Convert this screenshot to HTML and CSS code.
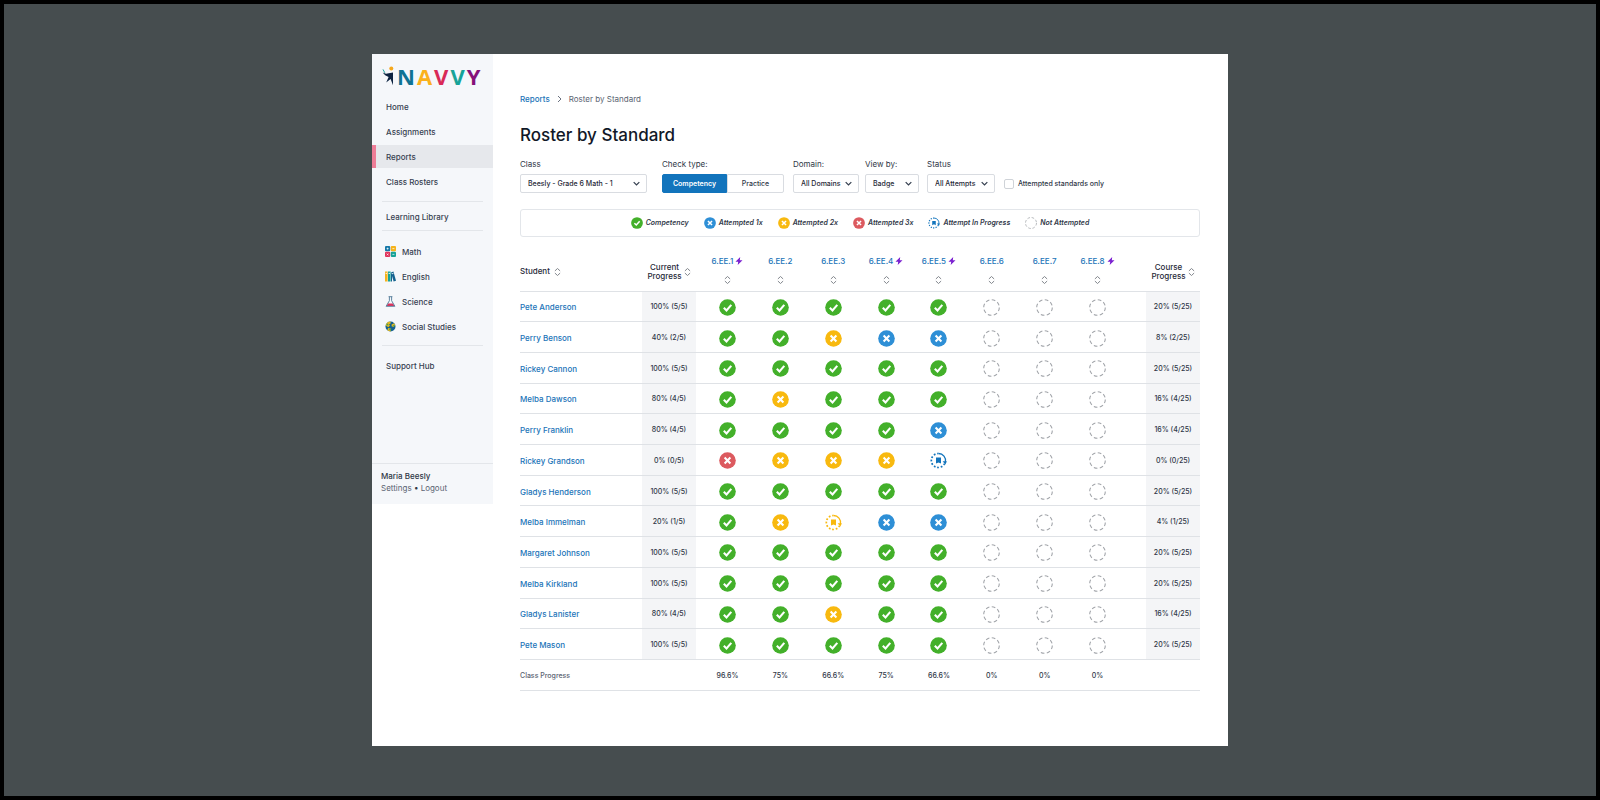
FILE: index.html
```html
<!DOCTYPE html>
<html lang="en">
<head>
  <meta charset="UTF-8">
  <title>Roster by Standard - Navvy</title>
  <link rel="stylesheet" href="styles.css">
</head>
<body>

<svg class="sprite" aria-hidden="true">
  <symbol id="check" viewBox="0 0 17 17">
    <circle cx="8.5" cy="8.5" r="8.3" fill="#43b02a"/>
    <path d="M4.8 8.8l2.7 2.6L12.3 5.9" fill="none" stroke="#fff" stroke-width="2.1"/>
  </symbol>
  <symbol id="cross" viewBox="0 0 17 17">
    <circle cx="8.5" cy="8.5" r="8.3" fill="currentColor"/>
    <path d="M5.6 5.6l5.8 5.8M11.4 5.6l-5.8 5.8" fill="none" stroke="#fff" stroke-width="2.1"/>
  </symbol>
  <symbol id="progress" viewBox="0 0 17 17">
    <path d="M14.6 11.6A7 7 0 1 1 8.5 1.5" fill="none" stroke="currentColor" stroke-width="1.7" stroke-dasharray="1.7 1.8"/>
    <path d="M8.5 1.5A7 7 0 0 1 15.4 10" fill="none" stroke="currentColor" stroke-width="1.3"/>
    <path d="M12.6 9.2h4.3l-1.5 3.4z" fill="currentColor"/>
    <path d="M6 5.6h5v6L8.5 10.4 6 11.6z" fill="currentColor"/>
  </symbol>
  <symbol id="empty" viewBox="0 0 17 17">
    <circle cx="8.5" cy="8.5" r="7.8" fill="none" stroke="#a3a6ab" stroke-width="1.1" stroke-dasharray="3.7 2.43"/>
  </symbol>
  <symbol id="sort" viewBox="0 0 8 10">
    <path d="M1 3.8L4 1l3 2.8M1 6.2L4 9l3-2.8" fill="none" stroke="#7d8188" stroke-width="1.1"/>
  </symbol>
  <symbol id="bolt" viewBox="0 0 8 8">
    <path d="M5.2 0L.5 4.7h2.7L2.7 8l4.8-4.8H4.8z" fill="#7a1fd0"/>
  </symbol>
  <symbol id="down" viewBox="0 0 8 8">
    <path d="M1.5 2.8L4 5.3l2.5-2.5" fill="none" stroke="#374151" stroke-width="1.1"/>
  </symbol>
</svg>

<div class="window">
  <aside class="sidebar">
    <a class="logo" href="#" aria-label="Navvy">
      <svg width="12" height="20" viewBox="0 0 12 20">
        <circle cx="9.3" cy="2.6" r="2" fill="#f5a81c"/>
        <path d="M1 3.4l1.8 3.4" stroke="#1ba39c" stroke-width="1"/>
        <path d="M.6 6.4l3.4 1.4 7-1.2v12.6L8.6 13l-4.4 3.6L6.6 11 3.2 9.2z" fill="#0d2340"/>
      </svg>
      <span class="letters"><span class="n">N</span><span class="a">A</span><span class="v">V</span><span class="v2">V</span><span class="y">Y</span></span>
    </a>
    <nav>
      <ul>
        <li><a href="#">Home</a></li>
        <li><a href="#">Assignments</a></li>
        <li><a href="#" class="active">Reports</a></li>
        <li><a href="#">Class Rosters</a></li>
      </ul>
      <h2>Learning Library</h2>
      <ul class="subjects">
        <li><a href="#">
          <svg width="11" height="11" viewBox="0 0 11 11">
            <rect width="5.2" height="5.2" rx="1" fill="#1678a8"/><rect x="5.8" width="5.2" height="5.2" rx="1" fill="#f5b31c"/>
            <rect y="5.8" width="5.2" height="5.2" rx="1" fill="#e0335c"/><rect x="5.8" y="5.8" width="5.2" height="5.2" rx="1" fill="#17a398"/>
            <path d="M1.6 2.6h2M2.6 1.6v2M7.4 2.6h2M1.8 7.6l1.6 1.6M3.4 7.6L1.8 9.2M7.4 8.4h2" stroke="#fff" stroke-width=".7"/>
          </svg>Math</a></li>
        <li><a href="#">
          <svg width="11" height="11" viewBox="0 0 11 11">
            <rect y=".5" width="2.6" height="10" fill="#f5b31c"/><rect x="3" y=".5" width="2.6" height="10" fill="#17a398"/>
            <path d="M6 1.4l2.4-.8L11 9.7l-2.4.8z" fill="#14628f"/><path d="M6 3h1v7.5H6z" fill="#14628f"/>
            <path d="M.6 2.4H2M3.6 2.4H5M7 2.8l1.4-.4" stroke="#fff" stroke-width=".9"/>
          </svg>English</a></li>
        <li><a href="#">
          <svg width="11" height="11" viewBox="0 0 11 11">
            <path d="M3 7.6L1.6 10h7.8L8 7.6z" fill="#e0335c"/>
            <path d="M3.6.7h3.8M4.4.7v4L1.1 10.3h8.8L6.6 4.7v-4" fill="none" stroke="#4f7896" stroke-width=".9"/>
          </svg>Science</a></li>
        <li><a href="#">
          <svg width="11" height="11" viewBox="0 0 11 11">
            <circle cx="5.5" cy="5.5" r="5" fill="#14628f"/>
            <path d="M.7 4.4C1.3 2 3 .6 5.4.6l.4 1.6-1.8 1.2 1 1.2-1.6 1.6zM6.6 3.4l2.6-1.2 1 2-1.6 1.8-2-.8zM3.2 7l3 .8-.6 2.6C4.2 10.4 3 9.8 2.4 9z" fill="#e3b81f"/>
            <path d="M1 4.2l2-2 .4 2zM8 4l2.2.4-1.6 1.4zM4 8h2l-.6 2z" fill="#35a05a"/>
          </svg>Social Studies</a></li>
      </ul>
      <ul class="support">
        <li><a href="#">Support Hub</a></li>
      </ul>
    </nav>
    <div class="user">
      <strong>Maria Beesly</strong>
      <div><a href="#">Settings</a> • <a href="#">Logout</a></div>
    </div>
  </aside>

  <main>
    <div class="breadcrumb">
      <a href="#">Reports</a>
      <svg width="5" height="8" viewBox="0 0 5 8"><path d="M1 1l3 3-3 3" fill="none" stroke="#6b7280"/></svg>
      <span>Roster by Standard</span>
    </div>
    <h1>Roster by Standard</h1>

    <form class="filters">
      <div class="field class-field">
        <label for="class">Class</label>
        <div class="select"><select id="class"><option>Beesly - Grade 6 Math - 1</option></select><svg><use href="#down"/></svg></div>
      </div>
      <div class="field type-field">
        <span class="label">Check type:</span>
        <div class="toggle"><button type="button" class="on">Competency</button><button type="button">Practice</button></div>
      </div>
      <div class="field domain-field">
        <label for="domain">Domain:</label>
        <div class="select"><select id="domain"><option>All Domains</option></select><svg><use href="#down"/></svg></div>
      </div>
      <div class="field view-field">
        <label for="view">View by:</label>
        <div class="select"><select id="view"><option>Badge</option></select><svg><use href="#down"/></svg></div>
      </div>
      <div class="field status-field">
        <label for="status">Status</label>
        <div class="select"><select id="status"><option>All Attempts</option></select><svg><use href="#down"/></svg></div>
      </div>
      <label class="only"><input type="checkbox"> Attempted standards only</label>
    </form>

    <div class="legend">
      <span><svg><use href="#check"/></svg>Competency</span>
      <span><svg class="blue"><use href="#cross"/></svg>Attempted 1x</span>
      <span><svg class="yellow"><use href="#cross"/></svg>Attempted 2x</span>
      <span><svg class="red"><use href="#cross"/></svg>Attempted 3x</span>
      <span><svg class="blue-line"><use href="#progress"/></svg>Attempt In Progress</span>
      <span><svg><use href="#empty"/></svg>Not Attempted</span>
    </div>

    <table>
      <colgroup>
        <col class="col-student"><col class="col-progress"><col class="col-left">
        <col span="8">
        <col class="col-right"><col class="col-progress">
      </colgroup>
      <thead><tr id="head"></tr></thead>
      <tbody id="rows"></tbody>
      <tfoot><tr id="foot"></tr></tfoot>
    </table>
  </main>
</div>

<script>
  // c = competency, 1/2/3 = attempts, p/q = in progress, - = not attempted
  const badges = {
    'c': ['check', '', 'Competency'],
    '1': ['cross', 'blue', 'Attempted 1x'],
    '2': ['cross', 'yellow', 'Attempted 2x'],
    '3': ['cross', 'red', 'Attempted 3x'],
    'p': ['progress', 'blue-line', 'Attempt In Progress'],
    'q': ['progress', 'yellow', 'Attempt In Progress'],
    '-': ['empty', '', 'Not Attempted']
  };

  const students = [
    ['Pete Anderson', '100% (5/5)', 'ccccc---', '20% (5/25)'],
    ['Perry Benson', '40% (2/5)', 'cc211---', '8% (2/25)'],
    ['Rickey Cannon', '100% (5/5)', 'ccccc---', '20% (5/25)'],
    ['Melba Dawson', '80% (4/5)', 'c2ccc---', '16% (4/25)'],
    ['Perry Franklin', '80% (4/5)', 'cccc1---', '16% (4/25)'],
    ['Rickey Grandson', '0% (0/5)', '3222p---', '0% (0/25)'],
    ['Gladys Henderson', '100% (5/5)', 'ccccc---', '20% (5/25)'],
    ['Melba Immelman', '20% (1/5)', 'c2q11---', '4% (1/25)'],
    ['Margaret Johnson', '100% (5/5)', 'ccccc---', '20% (5/25)'],
    ['Melba Kirkland', '100% (5/5)', 'ccccc---', '20% (5/25)'],
    ['Gladys Lanister', '80% (4/5)', 'cc2cc---', '16% (4/25)'],
    ['Pete Mason', '100% (5/5)', 'ccccc---', '20% (5/25)']
  ];

  const totals = ['96.6%', '75%', '66.6%', '75%', '66.6%', '0%', '0%', '0%'];
  const priority = [1, 4, 5, 8];

  function sortButton(name) {
    return `<button class="sort" aria-label="Sort by ${name}"><svg><use href="#sort"/></svg></button>`;
  }

  function badge(code) {
    const [icon, color, title] = badges[code];
    return `<td class="badge"><svg class="${color}" role="img" aria-label="${title}"><use href="#${icon}"/></svg></td>`;
  }

  document.getElementById('head').innerHTML =
    `<th class="student"><div class="sortable">Student ${sortButton('student')}</div></th>` +
    `<th><div class="sortable stacked"><span>Current<br>Progress</span>${sortButton('current progress')}</div></th><td></td>` +
    totals.map((t, i) => {
      const n = i + 1;
      const bolt = priority.includes(n) ? '<svg class="bolt"><use href="#bolt"/></svg>' : '';
      return `<th class="standard"><a href="#">6.EE.${n}${bolt}</a>${sortButton('6.EE.' + n)}</th>`;
    }).join('') +
    `<td></td><th><div class="sortable stacked"><span>Course<br>Progress</span>${sortButton('course progress')}</div></th>`;

  document.getElementById('rows').innerHTML = students.map(([name, current, marks, course]) =>
    `<tr><td class="student"><a href="#">${name}</a></td><td class="shade">${current}</td><td></td>` +
    [...marks].map(badge).join('') +
    `<td></td><td class="shade">${course}</td></tr>`
  ).join('');

  document.getElementById('foot').innerHTML =
    '<td class="student">Class Progress</td><td></td><td></td>' +
    totals.map(t => `<td>${t}</td>`).join('') + '<td></td><td></td>';
</script>

</body>
</html>
```
FILE: styles.css
```css
* {
  box-sizing: border-box;
}

body {
  margin: 0;
  min-height: 100vh;
  padding: 50px 16px;
  border: 4px solid #000;
  background-color: #464d4f;
  color: #2f3747;
  font-family: Inter, sans-serif;
  font-size: 8px;
  line-height: 10px;
}

a {
  color: #1b74b8;
  text-decoration: none;
}

button, select, input {
  font: inherit;
  color: inherit;
}

ul {
  list-style: none;
  margin: 0;
  padding: 0;
}

.sprite {
  display: none;
}

.window {
  max-width: 856px;
  margin: 0 auto;
  background-color: #fff;
  display: flex;
  align-items: flex-start;
}

/* sidebar */
.sidebar {
  width: 121px;
  min-height: 450px;
  flex-shrink: 0;
  background-color: #f5f7fa;
  display: flex;
  flex-direction: column;
}

.logo {
  display: flex;
  align-items: center;
  gap: 3px;
  padding: 12px 0 9px 10px;
}

.letters {
  display: flex;
  gap: 2px;
  font-family: "Open Sans", sans-serif;
  font-size: 22px;
  font-weight: 700;
  line-height: 20px;
}

.n { color: #0f7394; }
.a { color: #fbb11c; }
.v { color: #d92a57; }
.v2 { color: #17a398; }
.y { color: #86117a; }

.sidebar ul {
  display: flex;
  flex-direction: column;
  gap: 2px;
}

.sidebar li a {
  display: flex;
  align-items: center;
  gap: 6px;
  height: 23px;
  padding-left: 10px;
  border-left: 4px solid transparent;
  color: #374151;
  font-weight: 500;
}

.sidebar li a.active {
  background-color: #e6e8ec;
  border-left-color: #ee7d97;
}

.sidebar h2 {
  margin: 8px 10px 9px;
  padding: 10px 4px 8px;
  border-top: 1px solid #e3e6ea;
  border-bottom: 1px solid #e3e6ea;
  color: #374151;
  font-size: 8px;
  font-weight: 500;
}

.sidebar .subjects {
  padding-bottom: 7px;
}

.sidebar .subjects a {
  padding-left: 9px;
}

.sidebar .support::before {
  content: "";
  height: 1px;
  margin: 0 10px 6px;
  background-color: #e3e6ea;
}

.user {
  margin-top: auto;
  padding: 6px 9px 10px;
  border-top: 1px solid #e3e6ea;
  line-height: 12px;
}

.user strong {
  font-weight: 500;
}

.user a {
  color: #5b6472;
}

/* content */
main {
  flex: 1;
  min-width: 0;
  padding: 40px 28px 55px 27px;
}

.breadcrumb {
  display: flex;
  align-items: center;
  gap: 7px;
  color: #5b6472;
}

.breadcrumb a {
  font-weight: 500;
}

h1 {
  margin: 20px 0 13px;
  color: #111827;
  font-size: 17px;
  font-weight: 500;
  line-height: 22px;
}

.filters {
  display: flex;
  align-items: flex-end;
}

.field {
  display: flex;
  flex-direction: column;
  gap: 5px;
}

.class-field { width: 127px; margin-right: 15px; }
.type-field { width: 122px; margin-right: 9px; }
.domain-field { width: 66px; margin-right: 6px; }
.view-field { width: 54px; margin-right: 8px; }
.status-field { width: 68px; margin-right: 9px; }

.select {
  position: relative;
}

.select select {
  display: block;
  appearance: none;
  width: 100%;
  height: 19px;
  padding: 0 7px;
  border: 1px solid #d9dce1;
  border-radius: 2px;
  background-color: #fff;
  color: #1f2937;
  font-size: 7px;
  font-weight: 500;
}

.select svg {
  position: absolute;
  top: 5px;
  right: 6px;
  width: 9px;
  height: 9px;
  pointer-events: none;
}

.toggle {
  display: flex;
  height: 19px;
}

.toggle button {
  flex: 1;
  padding: 0;
  border: 1px solid #d9dce1;
  border-radius: 0 2px 2px 0;
  background-color: #fff;
  font-size: 7px;
  font-weight: 500;
}

.toggle .on {
  flex: none;
  width: 65px;
  border-color: #1274bc;
  border-radius: 2px 0 0 2px;
  background-color: #1274bc;
  color: #fff;
  font-weight: 600;
}

.only {
  display: flex;
  align-items: center;
  gap: 4px;
  height: 19px;
  font-size: 7px;
  font-weight: 500;
}

.only input {
  appearance: none;
  width: 10px;
  height: 10px;
  margin: 0;
  border: 1px solid #cfd3d8;
  border-radius: 2px;
}

.only input:checked {
  background-color: #1274bc;
}

.legend {
  display: flex;
  justify-content: center;
  gap: 15px;
  margin-top: 16px;
  padding: 7px 0;
  border: 1px solid #e3e6ea;
  border-radius: 3px;
  color: #2f3747;
  font-size: 7px;
  font-style: italic;
  font-weight: 600;
}

.legend span {
  display: flex;
  align-items: center;
  gap: 3px;
}

.legend svg {
  width: 12px;
  height: 12px;
}

.blue { color: #2e8fd6; }
.blue-line { color: #1274bc; }
.yellow { color: #f8b90f; }
.red { color: #dc5a5f; }

/* roster table */
table {
  width: 100%;
  height: 446px;
  margin-top: 8px;
  border-collapse: collapse;
  table-layout: fixed;
  font-size: 7px;
  text-align: center;
}

.col-student { width: 122px; }
.col-progress { width: 54px; }
.col-left { width: 5px; }
.col-right { width: 22px; }

th, td {
  padding: 2px 0 0;
  border-bottom: 1px solid #dfe2e6;
  font-weight: 500;
}

thead tr {
  height: 46px;
}

tfoot tr {
  height: 31px;
}

th {
  color: #1f2937;
  font-size: 8px;
  line-height: 9px;
}

.student {
  text-align: left;
  font-size: 8px;
}

tfoot .student {
  color: #5b6472;
  font-size: 7px;
}

.sortable {
  display: flex;
  align-items: center;
  gap: 4px;
  padding-top: 6px;
}

.stacked {
  justify-content: center;
  gap: 2px;
}

.sort {
  padding: 0;
  border: 0;
  background: none;
  cursor: pointer;
}

.sort svg {
  display: block;
  width: 7px;
  height: 10px;
}

.standard {
  padding-top: 8px;
}

.standard a {
  display: flex;
  align-items: center;
  justify-content: center;
  gap: 2px;
}

.standard .sort {
  margin-top: 9px;
}

.standard .sort svg {
  margin: 0 auto;
}

.bolt {
  width: 8px;
  height: 8px;
}

.shade {
  background-color: #f4f5f7;
}

.badge svg {
  display: block;
  width: 17px;
  height: 17px;
  margin: 0 auto;
}
```
